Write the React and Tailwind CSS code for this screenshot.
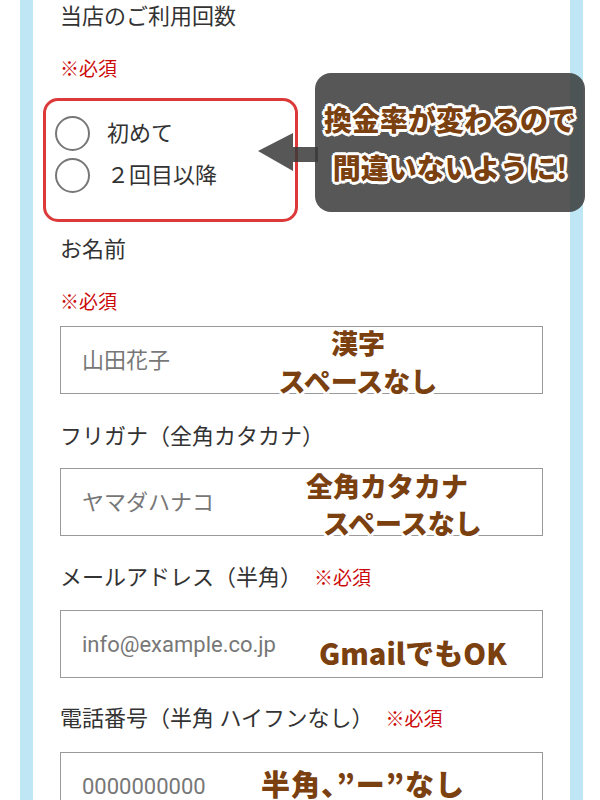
import React from "react";

const outline =
  "[text-shadow:2px_0_0_#fff,-2px_0_0_#fff,0_2px_0_#fff,0_-2px_0_#fff,2px_2px_0_#fff,-2px_-2px_0_#fff,2px_-2px_0_#fff,-2px_2px_0_#fff]";

function Required({ className = "" }) {
  return <span className={`text-[19px] text-[#cc0a0a] ${className}`}>※必須</span>;
}

function Label({ children, className = "" }) {
  return <div className={`text-[22px] leading-[32px] text-[#333] ${className}`}>{children}</div>;
}

function Field({ placeholder, className = "mt-[16px]", children }) {
  return (
    <div className={`relative h-[68px] border border-[#999] bg-white flex items-center pl-[21px] ${className}`}>
      <span className="text-[22px] text-[#777]">{placeholder}</span>
      {children}
    </div>
  );
}

function Note({ className = "", children }) {
  return (
    <div
      className={`absolute font-['Noto_Sans_CJK_JP',sans-serif] font-black text-[27px] text-[#7a400f] whitespace-nowrap ${outline} ${className}`}
    >
      {children}
    </div>
  );
}

function Radio({ label }) {
  return (
    <div className="flex items-center h-[42px]">
      <span className="w-[35px] h-[35px] rounded-full border-[2.5px] border-[#777] bg-white" />
      <span className="ml-[17px] text-[22px] text-[#333]">{label}</span>
    </div>
  );
}

export default function App() {
  return (
    <div className="min-h-screen bg-white font-['Roboto','Noto_Sans_CJK_JP',sans-serif]">
      <div className="relative ml-[20px] mr-[17px] min-h-screen border-x-[13px] border-[#bee6f5] px-[27px] pb-[40px]">
        <Label className="pt-[1px]">当店のご利用回数</Label>
        <div className="mt-[21px] leading-[32px]">
          <Required />
        </div>

        {/* radio group */}
        <div className="mt-[11px] -ml-[17px] w-[255px] h-[124px] rounded-[15px] border-[3px] border-[#dc3a3a] pt-[11px] pl-[9px]">
          <Radio label="初めて" />
          <Radio label="２回目以降" />
        </div>

        {/* callout */}
        <svg className="absolute left-[225px] top-[131px]" width="60" height="42" viewBox="0 0 60 42">
          <path d="M0 20 L35 2 L35 16 L60 16 L60 31 L35 31 L35 40 Z" fill="#3a3a3a" fillOpacity="0.85" />
        </svg>
        <div className="absolute left-[282px] top-[73px] w-[270px] h-[139px] rounded-[16px] bg-[#3a3a3a]/85 flex flex-col items-center justify-center font-['Noto_Sans_CJK_JP',sans-serif]">
          <div className="font-black text-[28px] leading-[48px] text-[#7a400f] whitespace-nowrap [text-shadow:3px_0_0_#fff,-3px_0_0_#fff,0_3px_0_#fff,0_-3px_0_#fff,2px_2px_0_#fff,-2px_-2px_0_#fff,2px_-2px_0_#fff,-2px_2px_0_#fff]">
            換金率が変わるので
          </div>
          <div className="font-black text-[28px] leading-[48px] text-[#7a400f] whitespace-nowrap [text-shadow:3px_0_0_#fff,-3px_0_0_#fff,0_3px_0_#fff,0_-3px_0_#fff,2px_2px_0_#fff,-2px_-2px_0_#fff,2px_-2px_0_#fff,-2px_2px_0_#fff]">
            間違いないように!
          </div>
        </div>

        <Label className="mt-[12px]">お名前</Label>
        <div className="mt-[21px] leading-[32px]">
          <Required />
        </div>
        <Field placeholder="山田花子" className="mt-[6px]">
          <Note className="left-[197px] w-[200px] top-[-3px] leading-[38px] text-center">
            <div>漢字</div>
            <div>スペースなし</div>
          </Note>
        </Field>

        <Label className="mt-[27px]">フリガナ（全角カタカナ）</Label>
        <Field placeholder="ヤマダハナコ" className="mt-[15px]">
          <Note className="left-[245px] top-[-2px] leading-[37px]">
            <div>全角カタカナ</div>
            <div className="pl-[17px]">スペースなし</div>
          </Note>
        </Field>

        <Label className="mt-[26px]">
          メールアドレス（半角）<Required className="ml-[12px]" />
        </Label>
        <Field placeholder="info@example.co.jp" className="mt-[15px]">
          <Note className="left-[258px] top-[21px] leading-[40px] text-[29px]">GmailでもOK</Note>
        </Field>

        <Label className="mt-[25px]">
          電話番号（半角 ハイフンなし）<Required className="ml-[12px]" />
        </Label>
        <Field placeholder="0000000000" className="mt-[16px]">
          <Note className="left-[200px] top-[15px] leading-[30px] text-[29px] tracking-[1px]">半角、”ー”なし</Note>
        </Field>
      </div>
    </div>
  );
}
